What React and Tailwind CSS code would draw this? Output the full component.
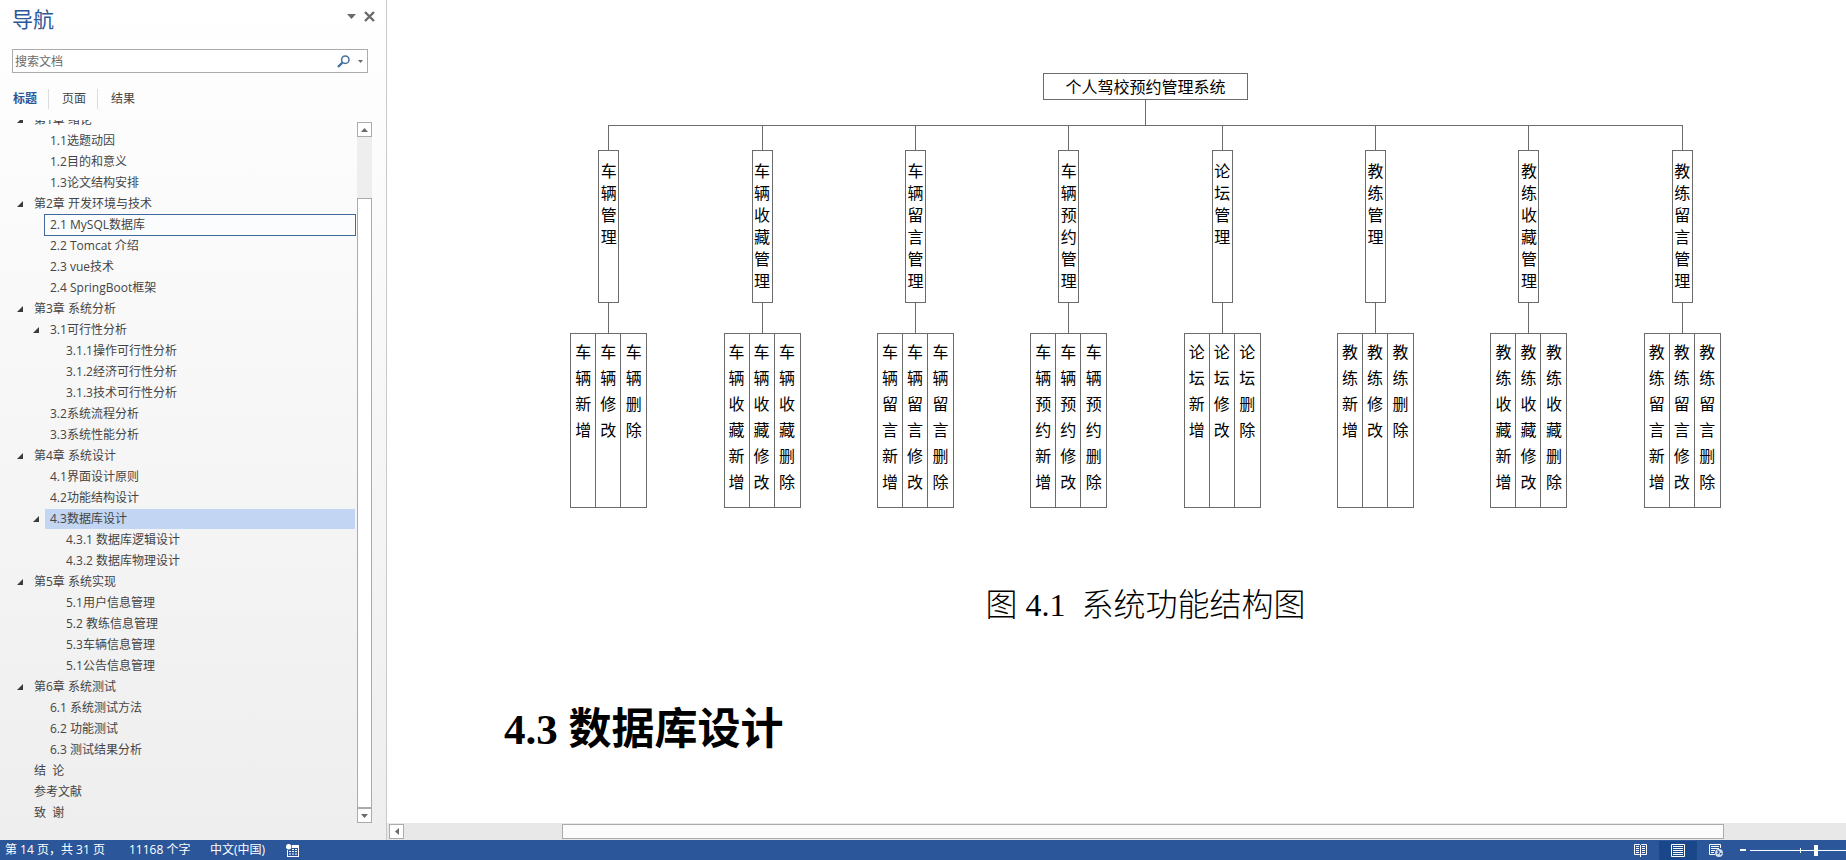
const OUTLINE = [
  { level: 1, text: "第1章 绪论", open: true },
  { level: 2, text: "1.1选题动因" },
  { level: 2, text: "1.2目的和意义" },
  { level: 2, text: "1.3论文结构安排" },
  { level: 1, text: "第2章 开发环境与技术", open: true },
  { level: 2, text: "2.1 MySQL数据库", focused: true },
  { level: 2, text: "2.2 Tomcat 介绍" },
  { level: 2, text: "2.3 vue技术" },
  { level: 2, text: "2.4 SpringBoot框架" },
  { level: 1, text: "第3章 系统分析", open: true },
  { level: 2, text: "3.1可行性分析", open: true },
  { level: 3, text: "3.1.1操作可行性分析" },
  { level: 3, text: "3.1.2经济可行性分析" },
  { level: 3, text: "3.1.3技术可行性分析" },
  { level: 2, text: "3.2系统流程分析" },
  { level: 2, text: "3.3系统性能分析" },
  { level: 1, text: "第4章 系统设计", open: true },
  { level: 2, text: "4.1界面设计原则" },
  { level: 2, text: "4.2功能结构设计" },
  { level: 2, text: "4.3数据库设计", open: true, selected: true },
  { level: 3, text: "4.3.1 数据库逻辑设计" },
  { level: 3, text: "4.3.2 数据库物理设计" },
  { level: 1, text: "第5章 系统实现", open: true },
  { level: 3, text: "5.1用户信息管理" },
  { level: 3, text: "5.2 教练信息管理" },
  { level: 3, text: "5.3车辆信息管理" },
  { level: 3, text: "5.1公告信息管理" },
  { level: 1, text: "第6章 系统测试", open: true },
  { level: 2, text: "6.1 系统测试方法" },
  { level: 2, text: "6.2 功能测试" },
  { level: 2, text: "6.3 测试结果分析" },
  { level: 1, text: "结  论" },
  { level: 1, text: "参考文献" },
  { level: 1, text: "致  谢" },
];

const MODULES = ["车辆", "车辆收藏", "车辆留言", "车辆预约", "论坛", "教练", "教练收藏", "教练留言"];
const ACTIONS = ["新增", "修改", "删除"];

const GUTTER = { 1: "w-[29px]", 2: "w-[45px]", 3: "w-[45px]" };
const INDENT = { 1: "pl-[5px]", 2: "pl-[5px]", 3: "pl-[21px]" };

function Triangle({ dir, className }) {
  const points = { down: "0,0 9,0 4.5,5", up: "0,5 9,5 4.5,0", small: "0,0 5,0 2.5,3" }[dir];
  return (
    <svg className={className} viewBox={dir === "small" ? "0 0 5 3" : "0 0 9 5"} aria-hidden="true">
      <polygon points={points} fill="currentColor" />
    </svg>
  );
}

function OutlineRow({ item }) {
  const frame = item.focused
    ? "outline outline-1 outline-[#41699c] bg-[#fafcfd]"
    : item.selected
      ? "bg-[#c2d5f2]"
      : "";
  return (
    <li className="flex h-[21px] shrink-0 items-center">
      <span className={`flex shrink-0 justify-end pr-[6px] ${GUTTER[item.level]}`}>
        {item.open && (
          <button type="button" aria-label="折叠" className="block">
            <svg className="h-[6px] w-[6px]" viewBox="0 0 6 6" aria-hidden="true">
              <polygon points="6,0 6,6 0,6" fill="#3b3b3b" />
            </svg>
          </button>
        )}
      </span>
      <a href="#outline" className={`block h-5 flex-1 whitespace-pre leading-5 ${INDENT[item.level]} ${frame}`}>
        {item.text}
      </a>
    </li>
  );
}

function Navigation() {
  return (
    <aside className="flex w-[387px] shrink-0 flex-col border-r border-[#c9c9c9] bg-linear-to-b from-white to-[#eeeeee] text-xs text-[#444444]">
      <header className="flex items-start justify-between pl-3 pr-[11px] pt-[5px]">
        <h1 className="text-[21px] leading-[28px] text-[#2b579a]">导航</h1>
        <div className="flex items-center gap-2 pt-[6px] text-[#6a6a6a]">
          <button type="button" aria-label="窗格选项">
            <Triangle dir="down" className="h-[5px] w-[9px]" />
          </button>
          <button type="button" aria-label="关闭">
            <svg className="h-[11px] w-[11px]" viewBox="0 0 11 11" aria-hidden="true">
              <path d="M1 1 10 10M10 1 1 10" stroke="currentColor" strokeWidth="2.4" />
            </svg>
          </button>
        </div>
      </header>
      <form className="ml-3 mr-[18px] mt-4 flex h-6 items-center border border-[#ababab] bg-white">
        <input
          type="text"
          aria-label="搜索文档"
          placeholder="搜索文档"
          className="h-full min-w-0 flex-1 bg-transparent pl-[2px] outline-none placeholder:text-[#6a6a6a]"
        />
        <button type="button" aria-label="搜索" className="mr-2">
          <svg className="h-[13px] w-[13px]" viewBox="0 0 13 13" fill="none" stroke="#44719f" aria-hidden="true">
            <circle cx="8.3" cy="4.7" r="3.7" strokeWidth="1.5" />
            <path d="M5.5 7.5 1 12" strokeWidth="2.4" />
          </svg>
        </button>
        <button type="button" aria-label="搜索选项" className="mr-1 text-[#6a6a6a]">
          <Triangle dir="small" className="h-[3px] w-[5px]" />
        </button>
      </form>
      <nav className="mt-4 flex h-5 items-center pl-[13px] leading-5">
        <button type="button" className="w-[35px] text-left font-bold text-[#2b579a]">标题</button>
        <button type="button" className="w-[49px] border-l border-[#dcdcdc] pl-[13px] text-left">页面</button>
        <button type="button" className="border-l border-[#dcdcdc] pl-[13px]">结果</button>
      </nav>
      <div className="mt-[11px] flex flex-1 pb-[17px]">
        <div className="flex h-[703px] flex-1 flex-col justify-end overflow-hidden">
          <ul className="pr-px">
            {OUTLINE.map((item, i) => (
              <OutlineRow key={i} item={item} />
            ))}
          </ul>
        </div>
        <div className="ml-px mr-[14px] mt-[2px] flex w-[15px] flex-col bg-[#eeeeee]">
          <button type="button" aria-label="向上滚动" className="flex h-[15px] items-center justify-center border border-[#ababab] bg-white text-[#6a6a6a]">
            <Triangle dir="up" className="h-1 w-[7px]" />
          </button>
          <div className="mt-[61px] flex-1 border border-[#ababab] bg-white" />
          <button type="button" aria-label="向下滚动" className="flex h-[15px] items-center justify-center border border-[#ababab] bg-white text-[#6a6a6a]">
            <Triangle dir="down" className="h-1 w-[7px]" />
          </button>
        </div>
      </div>
    </aside>
  );
}

function Branch({ name, first, last }) {
  return (
    <li className="flex flex-col items-center">
      <div className="flex w-full">
        <span className={`h-px flex-1 ${first ? "" : "bg-[#6b6b6b]"}`} />
        <span className="h-px w-px bg-[#6b6b6b]" />
        <span className={`h-px flex-1 ${last ? "" : "bg-[#6b6b6b]"}`} />
      </div>
      <span className="h-6 w-px bg-[#6b6b6b]" />
      <div className="flex h-[153px] w-[21px] justify-center border border-[#6b6b6b] pt-2">
        <p className="w-4 break-all text-base leading-[22px]">{name}管理</p>
      </div>
      <span className="h-[30px] w-px bg-[#6b6b6b]" />
      <ul className="grid h-[175px] w-[77px] grid-cols-3 divide-x divide-[#6b6b6b] border border-[#6b6b6b]">
        {ACTIONS.map((action) => (
          <li key={action} className="flex justify-center pt-1">
            <p className="w-4 break-all text-base leading-[26px]">{name + action}</p>
          </li>
        ))}
      </ul>
    </li>
  );
}

function Page() {
  return (
    <article className="flex-1 pl-[117px] pr-[59px] pt-[73px] text-black">
      <figure>
        <div className="flex flex-col items-center px-7">
          <div className="flex h-[27px] w-[205px] justify-center border border-[#6b6b6b] text-base leading-6">
            个人驾校预约管理系统
          </div>
          <span className="h-[25px] w-px bg-[#6b6b6b]" />
          <ul className="grid w-full grid-cols-8">
            {MODULES.map((name, i) => (
              <Branch key={name} name={name} first={i === 0} last={i === MODULES.length - 1} />
            ))}
          </ul>
        </div>
        <figcaption className="mt-[73px] whitespace-pre text-center font-['Liberation_Serif','Noto_Sans_CJK_SC',serif] text-[32px] font-light leading-[48px]">
          图 4.1  系统功能结构图
        </figcaption>
      </figure>
      <h2 className="mt-[69px] font-['Liberation_Serif','Noto_Sans_CJK_SC',serif] text-[43px] font-bold leading-[64px]">
        4.3 数据库设计
      </h2>
    </article>
  );
}

function StatusBar() {
  return (
    <footer className="flex h-5 items-center bg-[#2b579a] pl-[5px] text-[12px] leading-5 text-white">
      <span className="w-[124px]">第 14 页，共 31 页</span>
      <span className="w-[81px]">11168 个字</span>
      <span className="w-[76px]">中文(中国)</span>
      <button type="button" aria-label="录制宏">
        <svg className="h-[13px] w-[13px]" viewBox="0 0 13 13" aria-hidden="true">
          <path d="M6 1h7v12H1V6h1v6h10V4H6z" fill="#fff" />
          <circle cx="2.7" cy="2.7" r="2.7" fill="#fff" />
          <path d="M6 5.500h2M9 5.500h2M3 7.500h2M6 7.500h2M9 7.500h2M3 10h2M6 10h2M9 10h2" stroke="#fff" />
        </svg>
      </button>
      <div className="ml-auto flex h-full items-center">
        <button type="button" aria-label="阅读视图" className="flex h-full w-[38px] items-center justify-center">
          <svg className="h-[13px] w-[13px]" viewBox="0 0 13 13" fill="none" stroke="#fff" aria-hidden="true">
            <path d="M6.500 1.500 5.500.5H.5v10h5l1 1 1-1h5V.5h-5zM6.500 1v12M2 2.500h3M2 4.500h3M2 6.500h3M2 8.500h3M8 2.500h3M8 4.500h3M8 6.500h3M8 8.500h3" />
          </svg>
        </button>
        <button type="button" aria-label="页面视图" className="flex h-[19px] w-[38px] items-center justify-center self-end bg-[#19478a]">
          <svg className="h-[13px] w-[14px]" viewBox="0 0 14 13" fill="none" stroke="#fff" aria-hidden="true">
            <path d="M.5.5h13v12H.5zM2 2.500h10M2 4.500h10M2 6.500h10M2 8.500h10M2 10.500h10" />
          </svg>
        </button>
        <button type="button" aria-label="Web 版式视图" className="flex h-full w-[38px] items-center justify-center">
          <svg className="h-[13px] w-[14px]" viewBox="0 0 14 13" fill="none" stroke="#fff" aria-hidden="true">
            <path d="M6 10.500H.5V.5h11V4M2 2.500h8M2 4.500h8M2 6.500h4M2 8.500h3" />
            <circle cx="10" cy="9" r="3.900" fill="#d5e0f0" stroke="none" />
            <path d="M8.500 6.500l1.500 1.500-1.500 2M11 10.500l1.500-1.500" stroke="#2b579a" strokeWidth="1.400" />
          </svg>
        </button>
        <button type="button" aria-label="缩小" className="ml-[5px] h-[2px] w-[6px] bg-white" />
        <input type="range" aria-label="缩放" className="sr-only" />
        <svg className="ml-1 h-3 w-[96px]" viewBox="0 0 96 12" aria-hidden="true">
          <path d="M0 6.500h96M50.500 4v5" stroke="#fff" />
          <rect x="64" y="1" width="4" height="11" fill="#fff" />
        </svg>
      </div>
    </footer>
  );
}

export default function App() {
  return (
    <div className="flex min-h-screen flex-col bg-white font-['Open_Sans','Noto_Sans_CJK_SC',sans-serif]">
      <div className="flex flex-1">
        <Navigation />
        <main className="flex min-w-0 flex-1 flex-col font-['Noto_Sans_CJK_SC',sans-serif]">
          <Page />
          <div className="flex h-[17px] items-center bg-[#e8e8e8] pl-[2px]">
            <button type="button" aria-label="向左滚动" className="flex h-[15px] w-[15px] items-center justify-center border border-[#ababab] bg-white">
              <svg className="h-[7px] w-1" viewBox="0 0 4 7" aria-hidden="true">
                <polygon points="4,0 4,7 0,3.5" fill="#6a6a6a" />
              </svg>
            </button>
            <div className="ml-[158px] mr-[122px] h-[15px] flex-1 border border-[#ababab] bg-[#fbfbfb]" />
          </div>
        </main>
      </div>
      <StatusBar />
    </div>
  );
}
